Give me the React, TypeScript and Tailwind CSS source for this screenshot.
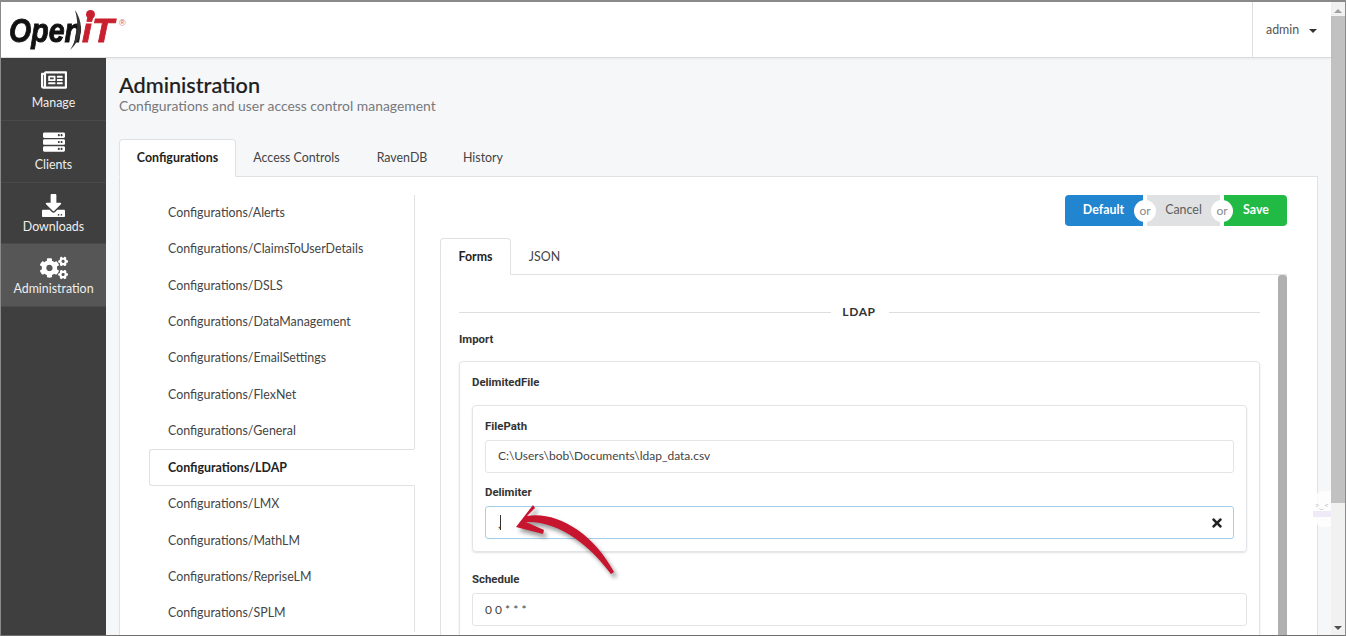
import { FaCogs, FaDownload, FaRegNewspaper, FaServer, FaTimes } from "react-icons/fa";

const navItems = [
  { label: "Manage", icon: FaRegNewspaper, size: 26, active: false, box: "h-[63px]", iconTop: "mt-[9px]", labelTop: "mt-0" },
  { label: "Clients", icon: FaServer, size: 22, active: false, box: "h-[62px]", iconTop: "mt-[8px]", labelTop: "mt-0" },
  { label: "Downloads", icon: FaDownload, size: 23, active: false, box: "h-[61px]", iconTop: "mt-[9px]", labelTop: "-mt-[1px]" },
  { label: "Administration", icon: FaCogs, size: 28, active: true, box: "h-[63px]", iconTop: "mt-[11px]", labelTop: "-mt-[2px]" },
];

const configItems = [
  "Alerts",
  "ClaimsToUserDetails",
  "DSLS",
  "DataManagement",
  "EmailSettings",
  "FlexNet",
  "General",
  "LDAP",
  "LMX",
  "MathLM",
  "RepriseLM",
  "SPLM",
];

function Logo() {
  return (
    <div className="relative h-[56px] w-[130px] overflow-hidden">
      <span className="absolute left-[8px] top-[8px] origin-left scale-x-[0.84] text-[34px] leading-[40px] font-bold italic text-[#111] [font-family:'Liberation_Sans',sans-serif] [-webkit-text-stroke:0.9px_#111]">
        Open
      </span>
      <svg className="absolute left-[65px] top-[6px]" width="20" height="46" viewBox="0 0 20 46">
        <path d="M9 2C18 16 17 30 4 42C12 30 13 16 9 2Z" fill="#333" />
      </svg>
      <span className="absolute left-[81px] top-[8px] origin-left scale-x-[1.05] text-[34px] leading-[40px] font-bold italic text-[#c8202f] [font-family:'Liberation_Sans',sans-serif] [-webkit-text-stroke:0.8px_#c8202f]">
        iT
      </span>
      <div className="absolute left-[85px] top-[8px] h-[9px] w-[9px] rounded-full bg-[#c8202f]" />
      <span className="absolute left-[118px] top-[16px] text-[9px] leading-[10px] text-[#d9606a] [font-family:'Liberation_Sans',sans-serif]">
        ®
      </span>
    </div>
  );
}

function Sidebar() {
  return (
    <div className="w-[105px] shrink-0 bg-[#3f3f3f]">
      {navItems.map((item) => {
        const Icon = item.icon;
        return (
          <div
            key={item.label}
            className={`flex ${item.box} flex-col items-center border-b border-[#4a4a4a] ${item.active ? "bg-[#565656]" : ""}`}
          >
            <div className={`${item.iconTop} flex h-[26px] items-center justify-center text-white`}>
              <Icon size={item.size} />
            </div>
            <span className={`${item.labelTop} text-[12.4px] leading-[20px] text-[#eeeeee]`}>{item.label}</span>
          </div>
        );
      })}
    </div>
  );
}

function ConfigMenu() {
  return (
    <div className="w-[295px] shrink-0 pl-[29px] pt-[18px]">
      <div className="flex flex-col border-r border-[#dfe1e5]">
        {configItems.map((name) => {
          const active = name === "LDAP";
          return (
            <div
              key={name}
              className={
                active
                  ? "-mr-px -mt-px mb-px flex h-[37px] items-center rounded-l-[3px] border border-r-white border-[#dfe1e5] bg-white pl-[18px] pt-[3px] text-[12.4px] font-bold text-[#222]"
                  : "flex h-[36.36px] items-center pl-[19px] text-[12.4px] text-[#444]"
              }
            >
              Configurations/{name}
            </div>
          );
        })}
      </div>
    </div>
  );
}

function OrDot() {
  return (
    <div className="absolute top-1/2 right-[-13px] z-10 flex h-[22px] w-[22px] -translate-y-1/2 items-center justify-center rounded-full bg-white text-[12px] font-normal text-[#8a8a8a]">
      or
    </div>
  );
}

function ActionButtons() {
  return (
    <div className="flex h-[31px] justify-end pr-[30px] text-[12.4px] font-bold">
      <div className="relative flex w-[78px] items-center justify-center rounded-l-[4px] bg-[#2185d0] pr-[1px] text-white">
        Default
        <OrDot />
      </div>
      <div className="relative ml-[4px] flex w-[73px] items-center justify-center bg-[#e0e1e2] font-normal text-[#5d5d5d]">
        Cancel
        <OrDot />
      </div>
      <div className="ml-[4px] flex w-[63px] items-center justify-center rounded-r-[4px] bg-[#21ba45] pl-[1px] text-white">
        Save
      </div>
    </div>
  );
}

function Field({ label, children }: { label: string; children: React.ReactNode }) {
  return (
    <div>
      <div className="mb-[7px] text-[11.4px] leading-[14px] font-bold text-[#333] [font-family:Roboto,sans-serif]">
        {label}
      </div>
      {children}
    </div>
  );
}

function FormPane() {
  return (
    <div className="min-w-0 flex-1 overflow-hidden pl-[25px] pt-[18px]">
      <ActionButtons />
      <div className="mt-[12px] flex h-[37px] text-[12.4px]">
        <div className="relative z-10 flex h-[37px] w-[71px] items-center justify-center rounded-t-[4px] border border-b-white border-[#dfe1e5] bg-white pt-px font-bold text-[#222]">
          Forms
        </div>
        <div className="flex h-[37px] w-[67px] items-center justify-center pt-[2px] text-[#444]">JSON</div>
      </div>
      <div className="-mt-px mr-[30px] flex h-[400px] border border-r-0 border-[#dfe1e5]">
        <div className="min-w-0 flex-1 px-[18px] pt-[28px]">
          <div className="flex items-center">
            <div className="h-px flex-1 bg-[#dcdee2]" />
            <div className="w-[58px] pr-px text-center text-[12px] leading-[18px] font-bold tracking-[0.6px] text-[#333]">
              LDAP
            </div>
            <div className="h-px flex-1 bg-[#dcdee2]" />
          </div>
          <div className="mt-[11px] text-[11.4px] leading-[14px] font-bold text-[#333] [font-family:Roboto,sans-serif]">
            Import
          </div>
          <div className="mt-[15px] rounded-[4px] border border-[#e3e4e7] px-[12px] pb-[12px] pt-[13px] shadow-[0_1px_2px_rgba(0,0,0,0.12)]">
            <div className="text-[11.4px] leading-[14px] font-bold text-[#333] [font-family:Roboto,sans-serif]">
              DelimitedFile
            </div>
            <div className="mt-[16px] rounded-[4px] border border-[#e3e4e7] px-[12px] py-[12px] pt-[13px] shadow-[0_1px_2px_rgba(0,0,0,0.12)]">
              <Field label="FilePath">
                <div className="flex h-[33px] items-center rounded-[3px] border border-[#e3e4e7] pb-[2px] pl-[12px] text-[12px] text-[#444]">
                  C:\Users\bob\Documents\ldap_data.csv
                </div>
              </Field>
              <div className="mt-[12px]">
                <Field label="Delimiter">
                  <div className="relative flex h-[33px] items-center justify-between rounded-[3px] border border-[#a5cfe8] pl-[12px] pr-[9px] text-[12px] text-[#444]">
                    <span className="pt-[3px]">,</span>
                    <div className="absolute left-[14px] top-[8px] h-[15px] w-px bg-[#333]" />
                    <FaTimes size={14} className="text-[#222]" />
                  </div>
                </Field>
              </div>
            </div>
            <div className="mt-[20px]">
              <Field label="Schedule">
                <div className="flex h-[33px] items-center rounded-[3px] border border-[#e3e4e7] pl-[12px] text-[12px] text-[#444]">
                  0 0 * * *
                </div>
              </Field>
            </div>
          </div>
        </div>
        <div className="w-[9px] shrink-0 rounded-t-[3px] bg-[#b0b0b0]" />
      </div>
    </div>
  );
}

function Arrow() {
  return (
    <svg
      className="absolute left-[504px] top-[496px] z-20 drop-shadow-[3px_4px_2px_rgba(0,0,0,0.4)]"
      width="120"
      height="90"
      viewBox="505 498 120 90"
    >
      <path
        d="M516 527L533 505L535 508L527 516C555 511 592 531 614 572L611 574C590 546 560 521 526 522L544 530L543 534Z"
        fill="#c8152f"
      />
    </svg>
  );
}

function Scrollbar() {
  return (
    <div className="relative w-[14px] shrink-0 bg-[#f1f1f1]">
      <div className="absolute left-[3px] top-[7px] h-0 w-0 border-x-[4px] border-b-[4px] border-x-transparent border-b-[#a0a0a0]" />
      <div className="absolute left-0 top-[14px] h-[487px] w-[14px] bg-[#c1c1c1]" />
      <div className="absolute bottom-[5px] left-[3px] h-0 w-0 border-x-[4px] border-t-[4px] border-x-transparent border-t-[#505050]" />
    </div>
  );
}

export default function App() {
  return (
    <div className="relative flex h-[636px] w-[1346px] overflow-hidden border-x border-b border-t-2 border-x-[#8a8a8a] border-b-[#6f6f6f] border-t-[#8a8a8a] bg-white [font-family:Lato,sans-serif]">
      <div className="flex min-w-0 flex-1 flex-col">
        {/* Top bar */}
        <div className="relative z-10 flex h-[56px] shrink-0 justify-between border-b border-[#dcdcdc] bg-white shadow-[0_1px_2px_rgba(0,0,0,0.06)]">
          <Logo />
          <div className="flex w-[79px] items-center border-l border-[#dfdfdf] pl-[13px] pt-[2px] text-[12.4px] text-[#555]">
            admin
            <div className="ml-[10px] h-0 w-0 border-x-[4px] border-t-[4px] border-x-transparent border-t-[#333]" />
          </div>
        </div>
        <div className="flex min-h-0 flex-1">
          <Sidebar />
          {/* Page body */}
          <div className="min-w-0 flex-1 bg-[#f6f7f9] px-[13px] pt-[14px]">
            <div className="text-[21.7px] leading-[26px] font-medium text-[#1f1f1f] [-webkit-text-stroke:0.2px_#1f1f1f]">
              Administration
            </div>
            <div className="-mt-[2px] text-[13.9px] leading-[20px] text-[#77797d]">
              Configurations and user access control management
            </div>
            <div className="mt-[23px] flex h-[37px] text-[12.4px]">
              <div className="relative z-10 flex h-[38px] w-[117px] items-center justify-center rounded-t-[4px] border border-b-white border-[#dfe1e5] bg-white pt-px font-bold text-[#222]">
                Configurations
              </div>
              <div className="flex h-[37px] w-[121px] items-center justify-center pt-px text-[#444]">Access Controls</div>
              <div className="flex h-[37px] w-[90px] items-center justify-center pt-px text-[#444]">RavenDB</div>
              <div className="flex h-[37px] w-[72px] items-center justify-center pt-px text-[#444]">History</div>
            </div>
            <div className="flex h-[470px] border border-[#dfe1e5] bg-white">
              <ConfigMenu />
              <FormPane />
            </div>
          </div>
        </div>
      </div>
      <Scrollbar />
      <Arrow />
      {/* Faint chat widget at the right edge */}
      <div className="absolute left-[1307px] top-[489px] flex h-[36px] w-[23px] flex-col items-end rounded-l-[18px] bg-white/80 pt-[9px] text-[8px] leading-[10px] text-[#bbbbbb]">
        <span className="pr-[2px]">&gt;‿&lt;</span>
        <div className="mt-[1px] h-[6px] w-[18px] bg-[#efe9f8]" />
      </div>
    </div>
  );
}
